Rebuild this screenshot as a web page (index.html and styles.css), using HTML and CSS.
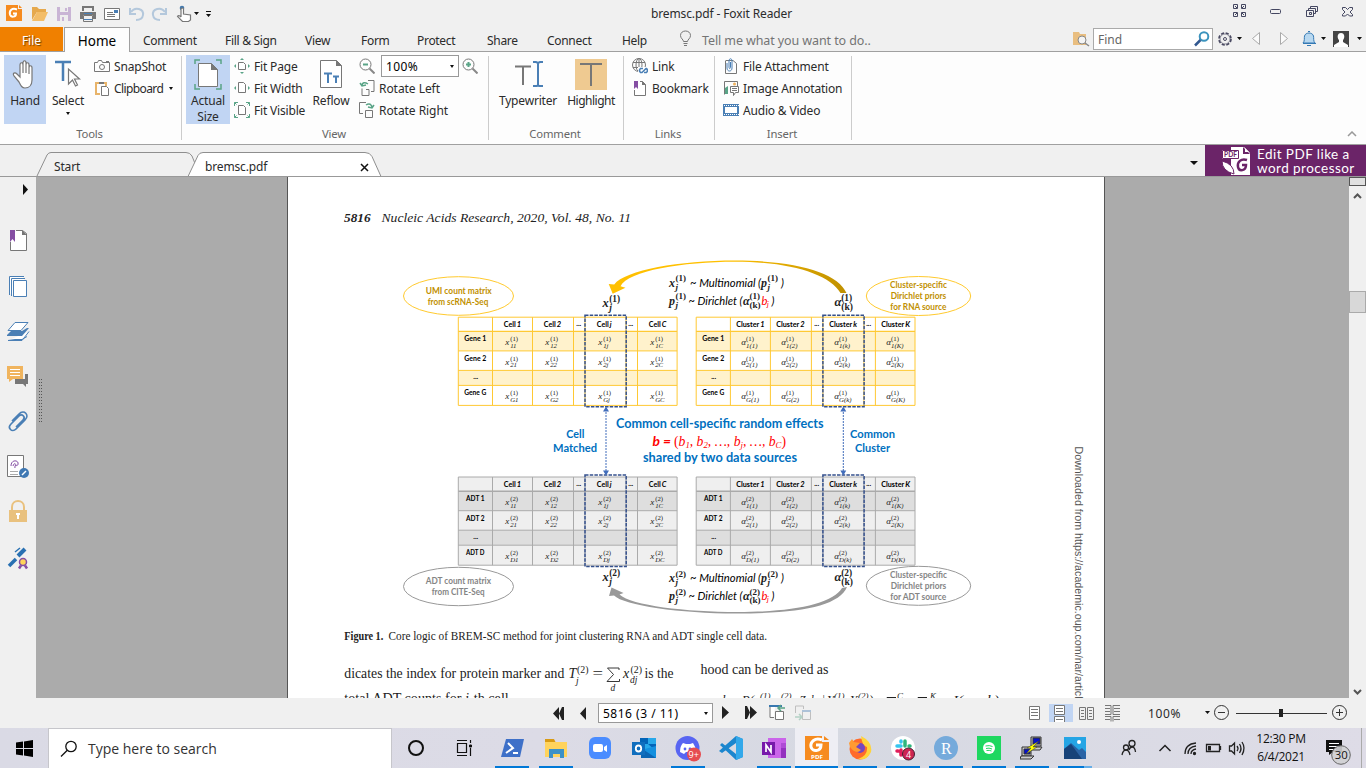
FILE: index.html
```html
<!DOCTYPE html>
<html lang="en">
<head>
<meta charset="utf-8">
<title>bremsc.pdf - Foxit Reader</title>
<link rel="stylesheet" href="styles.css">
</head>
<body>
<div class="app">
  <header class="titlebar">
    <svg class="quick" width="216" height="27" viewBox="0 0 216 27">
      <path fill="#f68b1f" d="M6 5h12v4h4v12H6z"/><path fill="#f68b1f" d="M19 5l3 3h-3z"/>
      <path d="M17 9.500c-5-2-8 1-7 5 1 3 6 3 6-1h-3" fill="none" stroke="#fff" stroke-width="2"/>
      <path fill="#e6a94d" d="M32 7h5l2 2h7v3H37l-5 8z"/><path fill="#f3bd68" d="M37 12h11l-4 9H32z"/>
      <path fill="#c9b5d5" d="M57 7h14v14H57z"/><path fill="#eee" d="M60 7h8v5h-8zM60 15h8v6h-8z"/><path fill="#c9b5d5" d="M65 8h2v3h-2zM62 17h2v4h-2z"/>
      <path fill="#777" d="M82 6h12v5h-2V8h-8v3h-2zM80 12h16v7h-3v-4H83v4h-3z"/><path fill="#4a7fb5" d="M84 13h8v1h-8zM84 19h8v1h-8z"/><path fill="none" stroke="#777" d="M83.500 15.500h9v6h-9z"/>
      <path fill="#fff" stroke="#777" d="M104.500 8.500h15v11h-15z"/><path stroke="#777" d="M107 12.500h6M107 14.500h8M107 16.500h8"/><path fill="#4a7fb5" d="M114 10h4v3h-4z"/>
      <path d="M131 12c4-6 13-3 12 3-.5 4-4 5-7 5M130 8v6h6" fill="none" stroke="#b4c8dc" stroke-width="2"/>
      <path d="M165 12c-4-6-13-3-12 3 .5 4 4 5 7 5M166 8v6h-6" fill="none" stroke="#b4c8dc" stroke-width="2"/>
      <circle cx="182" cy="8" r="2.300" fill="#4379ad"/><path d="M181 17V9q1.500-2 2.500 0v5l7 1v5l-2 1.500h-6l-5-5q1-2 3.500.5" fill="#fff" stroke="#777" stroke-width="1.200"/>
      <path d="M194 12h5l-2.500 3zM206 14h5l-2.500 3z" fill="#111"/><path d="M206 11.500h5" stroke="#111"/>
    </svg>
    <div class="window-title">bremsc.pdf - Foxit Reader</div>
    <svg class="window-controls" width="126" height="27" viewBox="1232 0 126 27" fill="none" stroke="#444761">
      <path d="M1233.500 4.500h4v4h-4zM1241.500 4.500h4v4h-4zM1233.500 12.500h4v4h-4zM1241.500 12.500h4v4h-4zM1235 6l2 2M1244 6l-2 2M1235 15l2-2M1244 15l-2-2"/>
      <rect x="1270.500" y="9.500" width="10" height="4" rx="1"/>
      <path d="M1306.500 10.500h7v6h-7zM1309.500 12.500h2v2h-2zM1308.500 10V8.500h7v5H1314M1310.500 8V6.500h7v5H1316"/>
      <path d="M1342.500 7.500h3l2 2 2-2h3v2l-2.500 2.500 2.500 2.500v1.500h-3l-2-2-2 2h-3v-1.500l2.500-2.500-2.500-2.500z"/>
    </svg>
  </header>

  <nav class="menubar">
    <span class="file-tab">File</span>
    <span class="home-tab">Home</span>
    <span class="menu m-comment">Comment</span>
    <span class="menu m-fill">Fill &amp; Sign</span>
    <span class="menu m-view">View</span>
    <span class="menu m-form">Form</span>
    <span class="menu m-protect">Protect</span>
    <span class="menu m-share">Share</span>
    <span class="menu m-connect">Connect</span>
    <span class="menu m-help">Help</span>
    <svg class="bulb" width="14" height="18" viewBox="0 0 14 18" fill="none" stroke="#777"><path d="M4.500 11.500c0-2-3-3-3-6 0-6 10-6 10 0 0 3-3 4-3 6zM4.500 13.500h4M5 15.500h3"/></svg>
    <span class="tell">Tell me what you want to do..</span>
    <svg class="find-folder" width="18" height="16" viewBox="0 0 18 16"><path fill="#e9be80" d="M1 1h6l1 2h6v11H1z"/><circle cx="10" cy="9" r="4" fill="#f4f4f4" stroke="#888"/><path stroke="#888" stroke-width="1.500" d="M13 12l4 3"/></svg>
    <span class="find"><span>Find</span><svg width="16" height="16" viewBox="0 0 16 16" fill="none"><circle cx="10" cy="5.500" r="4.300" stroke="#3b93bd" stroke-width="2"/><path d="M6.500 9L1 14.500" stroke="#325890" stroke-width="2.500"/></svg></span>
    <svg class="menu-right" width="150" height="24" viewBox="1216 27 150 24">
      <circle cx="1225" cy="39" r="6" fill="none" stroke="#4a4a62" stroke-width="1.700" stroke-dasharray="3.100 1.610"/><circle cx="1225" cy="39" r="5" fill="#f0f0f0" stroke="#4a4a62" stroke-width=".6"/><circle cx="1225" cy="39" r="1.500" fill="none" stroke="#4a4a62"/>
      <path fill="#111" d="M1237 37h5l-2.500 3zM1321 37h5l-2.500 3zM1357 37h5l-2.500 3z"/>
      <path fill="#fbfbfb" stroke="#aaa" d="M1259.500 32.500v12l-7-6zM1280.500 32.500v12l7-6z"/>
      <path d="M1303 43c2-2 1-5 1.500-7 1-4 8-4 9 0 .5 2-.5 5 1.500 7z" fill="#b8d8f0" stroke="#3479b4"/><path d="M1303 43.500h13M1307 45.500h4M1308 31.500h2" stroke="#3479b4"/>
      <path fill="#444" d="M1333 31h16v16h-16z"/><path fill="#fff" d="M1334 47v-2l5-3v-2c-2-2-2-7 2-7s4 5 2 7v2l5 3v2z"/>
    </svg>
  </nav>

  <section class="ribbon">
    <div class="group g-tools">
      <div class="group-row">
        <div class="big active hand"><svg width="28" height="32" viewBox="0 0 28 32"><path transform="translate(0 2)" d="M8 22L3 16c-2-3 1-4 3-2l3 3V5c0-3 3-3 3 0v8-10c0-3 3-3 3 0v10V5c0-3 3-3 3 0v9V8c0-3 3-3 3 0v12c0 5-3 8-7 8-3 0-4-2-6-6z" fill="#fff" stroke="#777" stroke-width="1.200"/></svg><span>Hand</span></div>
        <div class="big select"><svg width="30" height="32" viewBox="0 0 30 32"><path d="M2 4h16M10 5v18" stroke="#4a7fb5" stroke-width="2.500"/><path d="M15.500 11v15l4-4 3 6 2-1-3-6h5z" fill="#fff" stroke="#777" stroke-width="1.200"/></svg><span>Select</span><i class="drop"></i></div>
        <div class="stack s-tools">
          <div class="tool"><svg width="16" height="16" viewBox="0 0 16 16" fill="none" stroke="#777"><path d="M.5 4.500h3l1-2h3l1 2h7v9H.5z"/><circle cx="8" cy="9" r="2.500"/><path d="M12 3.500h3"/></svg><span>SnapShot</span></div>
          <div class="tool"><svg width="16" height="16" viewBox="0 0 16 16" fill="none"><path d="M5 3H2v11h4M10 3h2v3" stroke="#e8b46a" stroke-width="2"/><path d="M5 2h5v2H5z" fill="#777"/><path d="M7.500 6.500h5l2 2v7h-7z" fill="#fff" stroke="#777"/></svg><span class="clip-label">Clipboard</span><i class="drop"></i></div>
        </div>
      </div><div class="group-label">Tools</div>
    </div>
    <div class="group g-view">
      <div class="group-row">
        <div class="big active actual"><svg width="30" height="32" viewBox="0 0 30 32"><path d="M2 6V2h5M23 2h5v4M2 26v5h5M23 31h5v-5" fill="none" stroke="#5aa487" stroke-width="1.500"/><path d="M5.500 5.500h13l6 6v17h-19z" fill="#fff" stroke="#777"/><path d="M18 5v7h7z" fill="#777"/></svg><span>Actual<br>Size</span></div>
        <div class="stack s-fit">
          <div class="tool"><svg width="16" height="16" viewBox="0 0 16 16"><path d="M4.500 4.500h5l2 2v5h-7z" fill="#fff" stroke="#777"/><path fill="#5aa487" d="M6 2l2-2 2 2zM6 14l2 2 2-2zM2 6L0 8l2 2zM14 6l2 2-2 2z"/></svg><span>Fit Page</span></div>
          <div class="tool"><svg width="16" height="16" viewBox="0 0 16 16"><path d="M4.500 2.500h5l2 2v8h-7z" fill="#fff" stroke="#777"/><path fill="#5aa487" d="M2 6L0 8l2 2zM14 6l2 2-2 2z"/></svg><span>Fit Width</span></div>
          <div class="tool"><svg width="16" height="16" viewBox="0 0 16 16"><path d="M4.500 3.500h5l2 2v7h-7z" fill="#fff" stroke="#777"/><path d="M.5 4V.5H4M.5.5l2 2M12 .5h3.500V4M15.500.5l-2 2M.5 12v3.500H4M.5 15.500l2-2M12 15.500h3.500V12M15.500 15.500l-2-2" stroke="#5aa487" fill="none"/></svg><span>Fit Visible</span></div>
        </div>
        <div class="big reflow"><svg width="24" height="32" viewBox="0 0 24 32"><path d="M1.500 2.500h16l5 5v22h-21z" fill="#fff" stroke="#777"/><path d="M17 2v6h6z" fill="#777"/><path d="M5 15.500h8M9 16v9M14 18.500h6M17 19v6" stroke="#4a7fb5" stroke-width="2"/></svg><span>Reflow</span></div>
        <div class="stack s-zoom">
          <div class="tool"><svg width="16" height="16" viewBox="0 0 16 16" fill="none"><circle cx="6.500" cy="6.500" r="5.500" stroke="#777"/><path d="M10.500 10.500l5 5" stroke="#888" stroke-width="2"/><path d="M4 6.500h5" stroke="#5aa487" stroke-width="2"/></svg><div class="zoom-box"><span>100%</span><i class="drop"></i></div><svg class="zoom-in" width="16" height="16" viewBox="0 0 16 16" fill="none"><circle cx="6.500" cy="6.500" r="5.500" stroke="#777"/><path d="M10.500 10.500l5 5" stroke="#888" stroke-width="2"/><path d="M4 6.500h5M6.500 4v5" stroke="#5aa487" stroke-width="2"/></svg></div>
          <div class="tool"><svg width="16" height="16" viewBox="0 0 16 16" fill="none" stroke="#777"><path d="M3 8.500v7h7v-6H7M9 .5h6v11h-3"/><path d="M3 6c0-4 3-4 6-2M1 3l2 3 4-1" stroke="#5aa487" stroke-width="1.500"/></svg><span>Rotate Left</span></div>
          <div class="tool"><svg width="16" height="16" viewBox="0 0 16 16" fill="none" stroke="#777"><path d="M7 .5H.5v11H4M6.500 8.500h7v7h-7z"/><path d="M7 3c3-2 6-1 6 3M9 5l4 1 2-3" stroke="#5aa487" stroke-width="1.500"/></svg><span>Rotate Right</span></div>
        </div>
      </div><div class="group-label">View</div>
    </div>
    <div class="group g-comment">
      <div class="group-row">
        <div class="big typewriter"><svg width="32" height="32" viewBox="0 0 32 32"><path d="M3 8.500h16M11 9v18" stroke="#777" stroke-width="2"/><path d="M21 4h3l2 1 2-1h3M26 5v23M21 28h4l1-1 1 1h4" stroke="#4a7fb5" stroke-width="2" fill="none"/></svg><span>Typewriter</span></div>
        <div class="big highlight"><svg width="32" height="32" viewBox="0 0 32 32"><path fill="#efca91" d="M0 1h32v31H0z"/><path d="M5 6h22M16 6v22" stroke="#777" stroke-width="2"/></svg><span>Highlight</span></div>
      </div><div class="group-label">Comment</div>
    </div>
    <div class="group g-links">
      <div class="group-row"><div class="stack s-links">
        <div class="tool"><svg width="16" height="16" viewBox="0 0 16 16" fill="none" stroke="#777"><circle cx="7" cy="7" r="6.500"/><ellipse cx="7" cy="7" rx="3" ry="6.500"/><path d="M1 4.500h12M1 9.500h7M7 0v14"/><path fill="#fff" stroke="none" d="M6 9h10v7H6z"/><path d="M11 10.500H8.500q-2 2 0 4H10l4-4h.5q2 2 0 4H12" stroke="#4a7fb5" stroke-width="1.600"/></svg><span>Link</span></div>
        <div class="tool"><svg width="16" height="16" viewBox="0 0 16 16"><path d="M2.500 10v5.500h11v-11l-3-3H8" fill="#fff" stroke="#777"/><path d="M10 1v4h4z" fill="#777"/><path fill="#854ea3" d="M2 1h4v8L4 7 2 9z"/></svg><span>Bookmark</span></div>
      </div></div><div class="group-label">Links</div>
    </div>
    <div class="group g-insert">
      <div class="group-row"><div class="stack s-insert">
        <div class="tool"><svg width="16" height="16" viewBox="0 0 16 16" fill="none"><path d="M3 2.500h7l3.500 3v10h-11v-13" stroke="#777"/><path d="M4 5v5c0 4 5 4 5 0V3c0-3-3-3-3 0v6c0 2 1.500 2 1.500 0V4" stroke="#4a7fb5"/></svg><span>File Attachment</span></div>
        <div class="tool"><svg width="16" height="16" viewBox="0 0 16 16"><path d="M1.500 14.500v-13h13v5" fill="none" stroke="#777"/><path fill="#5aa487" d="M2 14V8l3-2v8z"/><circle cx="11.500" cy="4" r="1.500" fill="#efb15d"/><path d="M7.500 6.500h8v6h-3l-2 3v-3h-3z" fill="#fff" stroke="#777"/><path d="M9 8.500h5M9 10.500h5" stroke="#777"/></svg><span>Image Annotation</span></div>
        <div class="tool"><svg width="16" height="16" viewBox="0 0 16 16"><path d="M0 2h16v12H0z" fill="#4a7fb5"/><path d="M2 5h12v6H2z" fill="#fff"/><path d="M1 3.500h15M1 12.500h15" stroke="#fff" stroke-dasharray="1 1"/></svg><span>Audio &amp; Video</span></div>
      </div></div><div class="group-label">Insert</div>
    </div>
    <svg class="collapse" width="10" height="6" viewBox="0 0 10 6"><path d="M1 5l4-4 4 4" fill="none" stroke="#999" stroke-width="1.500"/></svg>
  </section>

  <section class="doc-tabs">
    <svg class="tab-shapes" width="400" height="31" viewBox="0 145 400 31"><path d="M37 176l10-21q1.500-2.500 4-2.500h135q4 0 6 3.500l8 20" fill="#f0f0f0" stroke="#8e8e8e"/><path d="M188 176.500l10-21q1.500-3 5-3h162q5 0 7 4l9 20" fill="#fff" stroke="#8e8e8e"/><path d="M361 164l7 7M368 164l-7 7" stroke="#111" stroke-width="1.500"/></svg>
    <span class="doc-start">Start</span><span class="doc-current">bremsc.pdf</span>
    <i class="drop tab-menu"></i>
    <div class="promo"><svg width="28" height="28" viewBox="0 0 28 28"><path fill="#fff" d="M9 0h13l6 6v22H9z"/><path fill="#6b2468" d="M21 0v7h7z"/><path fill="#fff" d="M23 1v4h4zM0 3h17v9H0z"/><path fill="none" stroke="#6b2468" d="M.5 3.500h16v8H.5z"/><text x="2" y="10" font-size="6.500" font-weight="700" fill="#6b2468" textLength="13">PDF</text><path d="M0 14q12 3 12 13Q0 24 0 14z" fill="#fff" stroke="#6b2468"/><path d="M25 13c-6-2-10 2-9 7 1 5 8 4 8-2h-4" fill="none" stroke="#6b2468" stroke-width="2.500"/></svg><div class="promo-copy"><span>Edit PDF like a</span><span>word processor</span></div></div>
  </section>

  <main class="workspace">
    <aside class="sidebar">
      <svg width="36" height="410" viewBox="0 177 36 410" fill="none">
        <path d="M23 184v11l5-5.500z" fill="#111"/>
        <path d="M10.500 242v8.500h16v-17l-4-3H16" fill="#fff" stroke="#777"/><path d="M22 230v5h5z" fill="#777"/><path d="M10 230h5v12l-2.500-3-2.500 3z" fill="#854ea3"/>
        <path d="M9.500 295v-18.500H24M11.500 296v-17.500H25M13.500 280.500h13v16h-13z" fill="#fff" stroke="#4a7fb5"/>
        <path d="M8 340.500h14l7-9M8 340.500l7-1h7l5-3" stroke="#4a7fb5" fill="#fff"/><path d="M15 322.500h13l-7 8H8z" fill="#fff" stroke="#4a7fb5"/><path d="M7 335l4-4h11l5-3h2l-7 8H7z" fill="#4a7fb5"/>
        <path d="M15 379h10v-5h3v10h-2v3l-3-3h-8z" fill="#777"/><path d="M7 366h16v13H13l-4 3v-3H7z" fill="#f0b45e"/><path d="M10 369.500h10M10 372.500h10M10 375.500h10" stroke="#fff"/>
        <path d="M16 428l7-7c3-3-1-7-4-4l-8 8c-4 4 1 9 5 5l9-9c5-5-1-11-6-6l-7 7" transform="translate(0 -1)" stroke="#4a7fb5" stroke-width="1.700"/>
        <path d="M7.500 455.500h16v21h-16z" fill="#fff" stroke="#777"/><path d="M11 466c0-7 8-6 7-2 0 3-4 0-3 4M13 466c1-4 4-2 2 0" stroke="#854ea3"/><path d="M10 471.500h8M10 474.500h8" stroke="#aaa"/><circle cx="24" cy="473" r="5" fill="#3f78b3"/><path d="M22 475l4-4" stroke="#fff" stroke-width="1.500"/>
        <path d="M12 511v-4c0-8 12-8 12 0v4" stroke="#e9c17e" stroke-width="2"/><path d="M9 510h18v12H9z" fill="#e9c17e"/><path d="M16 513h4v2h-1v4h-2v-4h-1z" fill="#fff"/>
        <path d="M9 566l7-7" stroke="#2870b2" stroke-width="3.500"/><path d="M18 556l7-7" stroke="#2870b2" stroke-width="4"/><path d="M15 552l5-4" stroke="#2870b2" stroke-width="1.500"/><circle cx="23" cy="562" r="3.500" fill="#ffd45a" stroke="#854ea3" stroke-width="1.500"/><path d="M21 565.500l-2 3M25 565.500l2 3" stroke="#854ea3" stroke-width="2.500"/>
      </svg>
    </aside>
    <div class="gutter"><div class="handle"></div></div>
    <article class="page">
      <svg id="paper" width="816" height="521" viewBox="288 177 816 521">
        <g class="times">
          <text class="bi" x="344" y="222" font-size="13.500" textLength="26.500">5816</text>
          <text class="it" x="381.500" y="222" font-size="13.500" textLength="249.500">Nucleic Acids Research, 2020, Vol. 48, No. 11</text>
        </g>
        <g class="gold-outline"><ellipse cx="458.500" cy="296" rx="55" ry="19.300"/><ellipse cx="918.500" cy="296" rx="52.200" ry="19.500"/></g>
        <defs><linearGradient id="gold"><stop offset=".5" stop-color="#ffc000"/><stop offset="1" stop-color="#bf9000"/></linearGradient></defs>
        <path fill="url(#gold)" d="M608.700 284l5.500.5C625 270 680 260.500 735 260.500c60 0 103 12 111.500 32.500h-6C829 274 790 261.800 735 261.800c-52 0-107 9-114.500 24.500l5 1.500-12.800 6z"/>
        <g id="figure"></g>
        <g class="gray-outline"><ellipse cx="458.500" cy="586.500" rx="55" ry="19.200"/><ellipse cx="918.500" cy="585.800" rx="52.200" ry="19.500"/></g>
        <path fill="#999" d="M611.500 587.500l12 5.500-4 1.500c12 11 66 17.500 118 17.500 55 0 95-8 104.500-24l5-1C839 606 800 613.500 736 613.500c-56 0-112-8-122-18l-5 .5z"/>
        <g class="calibri label-gold"><text x="425.700" y="293.700" textLength="66">UMI count matrix</text><text x="427.700" y="304.500" textLength="60.600">from scRNA-Seq</text><text x="890" y="288" textLength="57">Cluster-specific</text><text x="890.700" y="299" textLength="55.600">Dirichlet priors</text><text x="890.300" y="310" textLength="56">for RNA source</text></g>
        <g class="calibri label-gray"><text x="425.700" y="584" textLength="65.300">ADT count matrix</text><text x="431.700" y="595" textLength="53">from CITE-Seq</text><text x="890" y="578" textLength="57">Cluster-specific</text><text x="890.700" y="589" textLength="55.600">Dirichlet priors</text><text x="890.300" y="600" textLength="56">for ADT source</text></g>
        <g class="calibri label-blue"><text x="616" y="428" textLength="207.500">Common cell-specific random effects</text><text x="643" y="462" textLength="154">shared by two data sources</text></g>
        <g class="calibri label-blue side-label"><text x="566.300" y="438" textLength="18">Cell</text><text x="553" y="452" textLength="44">Matched</text><text x="850" y="437.500" textLength="45">Common</text><text x="855" y="451.500" textLength="35">Cluster</text></g>
        <g class="red"><text class="calibri bold-it" x="652.500" y="445.500" font-size="14" textLength="18.500">b =</text><text class="math-it" x="674" y="445.500" font-size="14" textLength="112"><tspan class="up">(</tspan>b<tspan font-size="9" dy="2.500">1</tspan><tspan dy="-2.500">, b</tspan><tspan font-size="9" dy="2.500">2</tspan><tspan dy="-2.500">, …, b</tspan><tspan font-size="9" dy="2.500">j</tspan><tspan dy="-2.500">, …, b</tspan><tspan font-size="9" dy="2.500">C</tspan><tspan class="up" dy="-2.500">)</tspan></text></g>
        <g class="times">
          <text x="344.300" y="639.500" font-size="11.500" font-weight="700" textLength="39">Figure 1.</text>
          <text x="388.500" y="639.500" font-size="11.500" textLength="378.500">Core logic of BREM-SC method for joint clustering RNA and ADT single cell data.</text>
          <text x="344.300" y="678.300" font-size="14" textLength="220">dicates the index for protein marker and</text>
          <text class="it" x="568.500" y="678.300" font-size="14">T</text><text x="577" y="672.500" font-size="9.500" textLength="11.500">(2)</text><text class="it" x="576" y="684" font-size="9.500">j</text><text x="592.500" y="678.300" font-size="14" textLength="10.500">=</text><path d="M619 670v-2h-11.500l6 6.500-6.500 7h12.500v-2.500" fill="none" stroke="#222" stroke-width=".9"/><text class="it" x="610.500" y="690.500" font-size="9.500">d</text><text class="it" x="623" y="678.300" font-size="14">x</text><text x="630.500" y="672.500" font-size="9.500" textLength="11.500">(2)</text><text class="it" x="630" y="682.500" font-size="9.500">dj</text><text x="644.500" y="678.300" font-size="14" textLength="29">is the</text>
          <text x="700.500" y="674.300" font-size="14" textLength="128">hood can be derived as</text>
          <text x="344.300" y="703" font-size="14" textLength="168">total ADT counts for <tspan class="it">j</tspan>-th cell.</text>
          <g class="it"><text x="722" y="704" font-size="13" textLength="32">log P(</text><text x="754" y="704" font-size="13">x</text><text x="760" y="699" font-size="9">(1)</text><text x="775" y="704" font-size="13">x</text><text x="781" y="699" font-size="9">(2)</text><text x="794" y="704" font-size="13" textLength="31">, Z, b, |</text><text x="827" y="704" font-size="13">Y</text><text x="834" y="699" font-size="9">(1)</text><text x="850" y="704" font-size="13">Y</text><text x="858" y="699" font-size="9">(2)</text><text x="869" y="704" font-size="13">)</text><text x="897" y="699" font-size="9">C</text><text x="930" y="699" font-size="9">K</text><text x="953" y="704" font-size="13" textLength="46">I(z = k)</text></g><path d="M896 697.500h-9l4 5M927 697.500h-9l4 5" fill="none" stroke="#222"/>
        </g>
        <text class="download" transform="translate(1074.500 446.500) rotate(90)" font-size="10.500" textLength="258">Downloaded from https://academic.oup.com/nar/article</text>
      </svg>
    </article>
    <div class="gutter-right"></div>
    <div class="scrollbar"><div class="split"></div><svg width="17" height="14" viewBox="0 0 17 14"><path d="M5 9l3.500-3.500L12 9" fill="none" stroke="#555" stroke-width="2"/></svg><div class="thumb"></div><svg class="down" width="17" height="12" viewBox="0 0 17 12"><path d="M5 4l3.500 3.500L12 4" fill="none" stroke="#555" stroke-width="2"/></svg></div>
  </main>

  <footer class="status">
    <svg class="prev" width="36" height="16" viewBox="552 705 36 16"><path fill="#222" d="M559 707v13l-6-6.500zM562 707h2v13h-2l-3-6.500zM586 707v13l-6-6.500z"/></svg>
    <div class="page-box"><span>5816 (3 / 11)</span><i class="drop"></i></div>
    <svg class="next" width="94" height="18" viewBox="720 705 94 18"><path fill="#222" d="M722 707v13l7-6.500zM745 707h2l3 6.500-3 6.500h-2zM750 707v13l7-6.500z"/><g fill="none"><path d="M775 707.500h-5v11h4M775.500 712.500h8v8h-8z" stroke="#777" fill="#fff"/><path d="M769 706h13v2h-13z" fill="#3979b0"/><path d="M785 709h-6M781 706l-3 3 3 3" stroke="#5aa487" stroke-width="1.500"/><g opacity=".4"><path d="M795.500 714v-7h8v3M802.500 712.500h8v8h-8z" stroke="#777"/><path d="M802 711h9v2h-9z" fill="#4a7fb5"/><path d="M795 718h6M799 715l3 3-3 3" stroke="#5aa487" stroke-width="1.500"/></g></g></svg>
    <svg class="view-modes" width="94" height="20" viewBox="1028 704 94 20" fill="none" stroke="#777"><path fill="#c1d5f3" stroke="none" d="M1049 705h24v18h-24z"/><path fill="#fff" d="M1029.500 707.500h10v13h-10zM1054.500 706.500h10v9h-10zM1054.500 723v-5.500h10v5.500"/><path d="M1031 710.500h7M1031 713.500h7M1031 716.500h7M1056 709.500h7M1056 712.500h7M1056 720.500h7M1079.500 708.500h6v12h-6zM1087.500 708.500h6v12h-6zM1081 711.500h3M1081 714.500h3M1081 717.500h3M1089 711.500h3M1089 714.500h3M1089 717.500h3M1105 706.500h6v9h-6M1120 706.500h-7v9h7M1105 709.500h5M1114 709.500h6M1105 712.500h5M1114 712.500h6M1105 717.500h6v5M1120 717.500h-7v5M1105 720.500h5M1114 720.500h6"/></svg>
    <span class="percent">100%</span>
    <svg class="slider" width="144" height="18" viewBox="1204 704 144 18" fill="none" stroke="#333"><path fill="#111" stroke="none" d="M1205 711h5l-2.500 3z"/><circle cx="1221.500" cy="712.500" r="7"/><circle cx="1339.500" cy="712.500" r="7"/><path d="M1218 712.500h7M1336 712.500h7M1339.500 709v7M1236 713.500h91"/><path fill="#222" stroke="none" d="M1279 709h4v8h-4z"/></svg>
  </footer>

  <footer class="taskbar">
    <div class="start"><svg width="17" height="17" viewBox="0 0 17 17"><path d="M0 2.500l7-1v6.500H0zM8 1.400L17 0v8H8zM0 9h7v6.500l-7-1zM8 9h9v8l-9-1.400z"/></svg></div>
    <div class="search"><svg width="18" height="18" viewBox="0 0 18 18" fill="none" stroke="#111" stroke-width="1.300"><circle cx="11" cy="6.500" r="5.200"/><path d="M7.300 10.200L1 16.500"/></svg><span>Type here to search</span></div>
    <div class="task cortana"><svg width="24" height="24" viewBox="0 0 24 24"><circle cx="12" cy="12" r="7" fill="none" stroke="#111" stroke-width="2"/></svg></div>
    <div class="task viewer"><svg width="24" height="24" viewBox="0 0 24 24" fill="none" stroke="#111"><path d="M4.500 7.500h9v9h-9zM4 4.500h10M4 19.500h10M17.500 4v3M17.500 12v8" stroke-width="1.200"/><path fill="#111" d="M16.500 9h2v2h-2z"/></svg></div>
    <div class="task wide open"><svg width="24" height="24" viewBox="0 0 24 24"><path d="M6 3h18l-4 18H1z" fill="#3e70c8"/><path d="M8 7l5 5-7 5M13 17h5" fill="none" stroke="#fff" stroke-width="2"/></svg></div>
    <div class="task wide open"><svg width="24" height="24" viewBox="0 0 24 24"><path fill="#d99b14" d="M1 3h9l2 4H1z"/><path fill="#ffd35c" d="M1 6h22v15H1z"/><path fill="#3c91c7" d="M5 13h15v9h-4v-4h-7v4H5z"/></svg></div>
    <div class="task wide"><svg width="24" height="24" viewBox="0 0 24 24"><rect x="1" y="1" width="22" height="22" rx="6" fill="#4a8cff"/><rect x="5" y="8" width="10" height="8" rx="2" fill="#fff"/><path fill="#fff" d="M16 11l3-2v7l-3-2z"/></svg></div>
    <div class="task wide"><svg width="24" height="24" viewBox="0 0 24 24"><path fill="#28a8ea" d="M8 2h16v13H8z"/><path fill="#0364b8" d="M8 2h8v6H8zM16 8h8v7z"/><path fill="#1490df" d="M9 14l15-4v12H9z"/><path fill="#0b65b4" d="M9 12l15 10H9z"/><path fill="#106ebe" d="M0 6h13v13H0z"/><ellipse cx="6.500" cy="12.500" rx="2.700" ry="3" fill="none" stroke="#fff" stroke-width="1.800"/></svg></div>
    <div class="task open"><svg width="26" height="26" viewBox="0 0 26 26"><circle cx="12.500" cy="12" r="12" fill="#5865f2"/><path d="M5 16q0-6 3-9l3 1h4l3-1q3 4 3 9l-4 2-2-2h-4l-2 2z" fill="#fff"/><circle cx="10" cy="13" r="1.400" fill="#5865f2"/><circle cx="15" cy="13" r="1.400" fill="#5865f2"/><circle cx="19" cy="18.500" r="7" fill="#e64c50"/><text x="13.500" y="22" font-size="9" fill="#fff">9+</text></svg></div>
    <div class="task"><svg width="24" height="24" viewBox="0 0 24 24"><path d="M17 0l7 3v18l-7 3L1 9l2-2 14 11V7L3 17l-3-2z" fill="#1b86ce"/><path fill="#32a8ea" d="M17 0l7 3v18l-7 3z"/></svg></div>
    <div class="task open"><svg width="24" height="24" viewBox="0 0 24 24"><path fill="#ca64ea" d="M6 2h18v20H6z"/><path fill="#ae4bd5" d="M19 7h5v5h-5z"/><path fill="#9332bf" d="M19 12h5v10h-5z"/><path fill="#7719aa" d="M0 6h13v13H0z"/><path d="M4 16V9l5 7V9" fill="none" stroke="#fff" stroke-width="1.700"/></svg></div>
    <div class="task open current"><svg width="24" height="24" viewBox="0 0 24 24"><path fill="#f68b1f" d="M0 0h17v6h7v18H0z"/><path fill="#f68b1f" d="M19 0l5 4h-5z"/><path d="M17 4c-7-3-12 2-11 7 1 5 10 5 10-2h-5" fill="none" stroke="#fff" stroke-width="3"/><text x="6" y="22.500" fill="#fff" font-size="5.500" font-weight="700" textLength="12">PDF</text></svg></div>
    <div class="task open"><svg width="24" height="24" viewBox="0 0 24 24"><circle cx="12" cy="13" r="10.500" fill="#ff6b2b"/><path d="M13 0q12 6 10 16-4 9-13 7 10-3 9-12-5-1-6-11z" fill="#ffd43b"/><circle cx="12" cy="12" r="5" fill="#7547bf"/><path d="M1 7l3-4 2 3 6 1-4 4 5 3q-5 5-11-3z" fill="#ff9b32"/></svg></div>
    <div class="task open"><svg width="24" height="26" viewBox="0 0 24 26"><circle cx="12" cy="12" r="12" fill="#fff"/><g stroke-width="3.500" stroke-linecap="round"><path stroke="#36c5f0" d="M6 10h4M10 5v1"/><path stroke="#2eb67d" d="M14 5v5M18 10h1"/><path stroke="#e01e5a" d="M10 14v5M6 15h1"/><path stroke="#ecb22e" d="M14 15h4"/></g><circle cx="17.500" cy="18" r="6" fill="#cd2553" stroke="#431f30"/><text x="15" y="21.500" font-size="9" fill="#fff">4</text></svg></div>
    <div class="task open"><svg width="24" height="24" viewBox="0 0 24 24"><circle cx="12" cy="12" r="12" fill="#75aadb"/><text class="r-letter" x="7" y="17.500" font-size="16" fill="#fff">R</text></svg></div>
    <div class="task open"><svg width="24" height="24" viewBox="0 0 24 24"><path fill="#1ed760" d="M0 0h24v24H0z"/><circle cx="12" cy="12" r="6" fill="#fff"/><path d="M8.500 10q4-1 7 .5M9 12.500q3-1 6 .5M9.500 14.500q3-.5 5 .5" fill="none" stroke="#1ed760"/></svg></div>
    <div class="task open"><svg width="24" height="24" viewBox="0 0 24 24" stroke="#333"><path d="M11 1h10v9H11z" fill="#ccc"/><path d="M13 2h7v6h-7z" fill="#0712c9"/><path d="M10 11h12l-2 3H10z" fill="#ccc"/><path d="M2 11h9v9H2z" fill="#ccc"/><path d="M4 13h6v5H4z" fill="#0712c9"/><path d="M1 20h13l-3 3H0z" fill="#ccc"/><path d="M19 5L7 12h4l-5 6 11-7h-4z" fill="#ff0" stroke-width=".5"/></svg></div>
    <div class="task open photos"><svg width="24" height="24" viewBox="0 0 24 24"><path fill="#25a5e5" d="M1 1h22v22H1z"/><circle cx="16" cy="6" r="2" fill="#fff"/><path fill="#2a63a5" d="M1 13l7-6 8 7 3-2 4 4v7H1z"/><path fill="#174279" d="M1 13l7-5 11 15H1z"/></svg></div>
    <svg class="tray" width="124" height="40" viewBox="1118 728 124 40" fill="none" stroke="#222" stroke-width="1.300"><circle cx="1132" cy="743.500" r="3"/><path d="M1129 750q1-3 3-3 3 0 3.500 5"/><circle cx="1126" cy="747.500" r="2.500"/><path d="M1122 755q1-5 4-5t4 5"/><path d="M1159.500 751l5.500-5.500 5.500 5.500" stroke-width="1.500"/><path d="M1185 754q0-10 11-11M1188 754q0-7 8-8M1191 754q0-4 5-5"/><circle cx="1194.500" cy="753.500" r="1" fill="#111"/><path d="M1206.500 744.500h13v7h-13zM1220.500 746v4"/><path d="M1208 746h3v4.500h-3z" fill="#222" stroke="none"/><path d="M1229.500 746h2l3-3v11l-3-3h-2zM1237 746q2 2.500 0 5M1239.500 744q3 4.500 0 9M1242 742q4 6 0 13"/></svg>
    <div class="clock"><span class="time">12:30 PM</span><span class="date">6/4/2021</span></div>
    <svg class="notice" width="28" height="40" viewBox="1322 728 28 40"><path fill="#111" d="M1325 740h16v12h-9l-4 3v-3h-3z"/><path d="M1328 743.500h10M1328 746.500h10M1328 749.500h7" stroke="#fff"/><circle cx="1340" cy="755" r="9.300" fill="#d0d0d3" fill-opacity=".9" stroke="#666"/><text x="1333.700" y="759" font-size="11.500" fill="#111" textLength="13">30</text></svg>
    <div class="show-desktop"></div>
  </footer>
</div>
<script src="figure.js"></script>
</body>
</html>
```
FILE: styles.css
```css
* { box-sizing: border-box; }
body { margin: 0; background: #f0f0f0; color: #2b2b2b; font-family: "Noto Sans", "Open Sans", sans-serif; font-size: 12px; overflow: hidden; }
svg { display: block; flex: none; }
.app { display: flex; flex-direction: column; width: 1366px; height: 768px; }
span { white-space: nowrap; }
.drop { width: 0; height: 0; border: 2.5px solid transparent; border-top: 3px solid #111; border-bottom: 0; flex: none; }

.titlebar { height: 27px; display: flex; }
.window-title { width: 145px; margin-left: 435px; line-height: 27px; letter-spacing: -.12px; }
.window-controls { margin-left: auto; margin-right: 8px; }

.menubar { height: 25px; display: flex; align-items: center; border-bottom: 1px solid #a0a0a0; flex: none; }
.file-tab { width: 63px; height: 24px; background: #f08000; color: #fff; line-height: 27px; text-align: center; text-shadow: 1px 1px 1px #704000; }
.home-tab { width: 66px; height: 25px; margin: 0 13px 0 1px; border: 1px solid #a0a0a0; border-bottom: 0; background: #fdfdfd; color: #000; font-size: 13.5px; line-height: 26px; text-align: center; align-self: flex-start; }
.menu { line-height: 24px; padding-top: 3px; letter-spacing: -.3px; }
.m-comment { width: 82px; }
.m-fill { width: 80px; }
.m-view, .m-form { width: 56px; }
.m-protect { width: 70px; }
.m-share { width: 60px; }
.m-connect { width: 75px; }
.m-help { width: 57px; }
.tell { margin-left: 9px; width: 370px; font-size: 12.5px; color: #747474; line-height: 24px; padding-top: 3px; letter-spacing: -.1px; }
.find { width: 120px; height: 22px; margin: 0 3px 0 3px; padding: 0 2px 0 4px; background: #fff; border: 1px solid #aaa; display: flex; align-items: center; justify-content: space-between; color: #666; }

.ribbon { height: 93px; background: #fdfdfd; border-bottom: 1px solid #a0a0a0; display: flex; flex: none; }
.group { padding-top: 3px; height: 92px; background: linear-gradient(#ccc, #ccc) right 4px / 1px 84px no-repeat; letter-spacing: -.18px; }
.group-row { display: flex; height: 69px; }
.group-label { text-align: center; color: #666; font-size: 11.3px; line-height: 20px; padding-right: 3px; }
.g-tools { width: 182px; }
.g-view { width: 307px; }
.g-comment { width: 135px; }
.g-links { width: 91px; }
.g-insert { width: 137px; }
.big { display: flex; flex-direction: column; align-items: center; padding-top: 3px; height: 69px; text-align: center; line-height: 16px; flex: none; }
.big span { margin-top: 3px; }
.active { background: #c1d5f3; }
.hand { width: 42px; margin-left: 4px; }
.select { width: 44px; }
.select .drop { margin-top: 3px; }
.actual { width: 44px; margin-left: 4px; }
.reflow { width: 46px; margin-left: 3px; }
.typewriter { width: 66px; margin-left: 6px; }
.highlight { width: 60px; letter-spacing: -.5px; }
.stack { display: flex; flex-direction: column; flex: none; }
.s-tools { margin-left: 4px; }
.s-fit { width: 71px; margin-left: 4px; }
.s-zoom { margin-left: 5px; letter-spacing: -.05px; }
.s-links { margin-left: 8px; }
.s-insert { margin-left: 8px; }
.tool { height: 22px; display: flex; align-items: center; gap: 4px; }
.clip-label { width: 51px; letter-spacing: -.6px; }
.zoom-box { width: 78px; height: 22px; border: 1px solid #999; margin: 0 1px 0 2px; padding: 0 4px; background: #fff; display: flex; align-items: center; justify-content: space-between; color: #000; letter-spacing: .4px; }
.zoom-in { margin-left: -2px; }
.collapse { margin: auto 9px 7px auto; }

.doc-tabs { height: 32px; border-bottom: 1px solid #999; display: flex; flex: none; position: relative; line-height: 44px; }
.tab-shapes { position: absolute; left: 0; top: 0; }
.doc-start, .doc-current { z-index: 1; letter-spacing: -.15px; }
.doc-start { width: 151px; margin-left: 54px; }
.tab-menu { margin: 16px 7px 0 auto; border-width: 4.5px 4px 0; border-style: solid; }
.promo { width: 161px; height: 31px; padding: 2px 0 0 17px; background: #6b2468; color: #fff; display: flex; gap: 7px; font: 13.5px/14px Lato, sans-serif; }
.promo-copy { display: flex; flex-direction: column; letter-spacing: .45px; }

.workspace { height: 521px; display: flex; flex: none; background: #ababab; }
.sidebar { width: 36px; background: #f0f0f0; }
.gutter { width: 251px; padding: 202px 0 0 3px; }
.handle { width: 4px; height: 43px; background: radial-gradient(circle at .5px .5px, #555 .7px, transparent .8px) 0 0 / 2px 3px; }
.page { width: 818px; background: #fff; border: solid #555; border-width: 0 1px; overflow: hidden; }
.gutter-right { width: 244px; }
.scrollbar { width: 17px; background: #f0f0f0; display: flex; flex-direction: column; }
.split { height: 9px; border: 1px solid #555; background: #e0e0e0; margin-bottom: 3px; }
.thumb { height: 22px; margin-top: 88px; background: #d8d8d8; border: 1px solid #aaa; }
.down { margin-top: auto; }
text { white-space: pre; }
.times { font-family: "Liberation Serif", serif; fill: #222; }
.it, .bi, .math-it, .bold-it { font-style: italic; }
.bi, .bold-it { font-weight: 700; }
.math, .math-it { font-family: "Liberation Serif", serif; }
.up { font-style: normal; }
.calibri { font-family: Lato, sans-serif; }
.label-gold, .label-gray { font-size: 9px; font-weight: 700; fill: #bf9000; }
.label-gray { fill: #858585; }
.label-blue { font-size: 13px; font-weight: 700; fill: #0070c0; }
.side-label { font-size: 11.5px; }
.red { fill: #f00; }
.gold-outline, .gray-outline { fill: #fff; stroke: #ffca2e; }
.gray-outline { stroke: #999; }
.download { font-family: "Liberation Sans", sans-serif; fill: #555; }

.status { height: 30px; display: flex; align-items: center; flex: none; }
.prev { margin-left: 552px; }
.page-box { width: 115px; height: 20px; margin-left: 10px; padding: 0 4px; border: 1px solid #999; background: #fff; display: flex; align-items: center; justify-content: space-between; color: #000; letter-spacing: .5px; }
.next { margin-left: 7px; }
.view-modes { margin-left: 214px; }
.percent { width: 56px; margin-left: 26px; letter-spacing: .6px; }

.taskbar { height: 40px; display: flex; background: linear-gradient(90deg, #dadae5, #dcdbe6 40%, #d6d9e2 60%, #dedce7); flex: none; font-family: "Open Sans", sans-serif; }
.start { width: 48px; padding: 12px 0 0 16px; }
.search { width: 344px; border: 1px solid #c6c6cb; border-bottom: 0; background: #fff; display: flex; align-items: center; gap: 10px; padding-left: 11px; font-size: 14px; color: #333; }
.task { width: 43px; height: 40px; padding-top: 8px; display: flex; justify-content: center; background: no-repeat center bottom / 34px 2px; }
.wide { width: 44px; }
.cortana { width: 48px; }
.viewer { width: 50px; }
.open { background-image: linear-gradient(#0078d7, #0078d7); }
.current { background-color: #eeeef4; background-size: 43px 2px; }
.photos { background-image: linear-gradient(90deg, #0078d7 76%, #66aee8 76%); }
.tray { margin-left: 22px; overflow: visible; }
.clock { width: 50px; margin-left: 14px; display: flex; flex-direction: column; align-items: center; font-size: 12px; line-height: 18px; padding-top: 2px; letter-spacing: -.3px; color: #111; }
.notice { margin-left: auto; margin-right: 10px; }
.show-desktop { width: 5px; border-left: 1px solid #aaa; }
.r-letter { font-family: "Liberation Serif", serif; }
```
FILE: figure.js
```js
const ns = 'http://www.w3.org/2000/svg';
const figure = document.getElementById('figure');

function add(tag, attrs, text) {
  const node = document.createElementNS(ns, tag);
  for (const key in attrs) node.setAttribute(key, attrs[key]);
  if (text) node.textContent = text;
  figure.appendChild(node);
}

function label(x, y, text, size, width, style) {
  const attrs = { x, y, 'font-size': size, class: 'calibri', style: style || 'font-weight:700' };
  if (width) attrs.textLength = width;
  add('text', attrs, text);
}

// A symbol with a superscript and a subscript stacked to its right.
function symbol(x, y, base, sup, sub, size, bold) {
  const small = size * 0.76;
  const step = size * 0.54;
  const weight = bold ? 700 : 400;
  add('text', { x, y, class: 'math', 'font-size': size, 'font-weight': weight, 'font-style': 'italic', fill: '#222' }, base);
  add('text', { x: x + step, y: y - size * 0.43, class: 'math', 'font-size': small, 'font-weight': weight, fill: '#222', textLength: small * 1.15 }, sup);
  add('text', { x: x + step, y: y + size * 0.28, class: 'math', 'font-size': small, 'font-weight': weight, 'font-style': sub.startsWith('(') ? 'normal' : 'italic', fill: '#222' }, sub);
}

function table(left, top, kind, source) {
  const gold = source === 1;
  const line = gold ? '#ffc933' : '#aaa';
  const xs = [0, 34.2, 74.2, 115.2, 126.7, 167.7, 179.2, 218.8];
  const ys = [0, 14.2, 33.7, 53.2, 68.2, 88.2];
  const fills = gold ? ['#fff', '#fff2cc', '#fff', '#fff2cc', '#fff'] : ['#efefef', '#dedede', '#efefef', '#dedede', '#efefef'];
  fills.forEach((fill, i) => add('rect', { x: left, y: top + ys[i], width: 218.8, height: ys[i + 1] - ys[i], fill }));
  xs.forEach(x => add('path', { d: `M${left + x} ${top}v88.2`, stroke: line }));
  ys.forEach(y => add('path', { d: `M${left} ${top + y}h218.8`, stroke: line, 'stroke-width': y === 14.2 ? 1.4 : 1 }));
  const centers = [54, 94, 147, 199];
  const names = kind === 'Cell' ? ['1', '2', 'j', 'C'] : ['1', '2', 'k', 'K'];
  centers.forEach((center, i) => {
    const w = kind === 'Cell' ? 17 : 28;
    label(left + center - w / 2, top + 9.8, kind, 7.5, w - 5);
    label(left + center + w / 2 - 4, top + 9.8, names[i], 7.5, 0, 'font-weight:700;font-style:italic');
  });
  label(left + 118, top + 9, '...', 7);
  label(left + 170, top + 9, '...', 7);
  const prefix = gold ? 'Gene' : 'ADT';
  const letters = ['1', '2', gold ? 'G' : 'D'];
  [24.2, 43.5, 78.2].forEach((y, i) => {
    const w = gold ? 22 : 18.5;
    label(left + 17 - w / 2, top + y, `${prefix} ${letters[i]}`, 7.3, w);
    centers.forEach((center, j) => {
      const sub = kind === 'Cell' ? letters[i] + names[j] : `${letters[i]}(${names[j]})`;
      symbol(left + center - (kind === 'Cell' ? 7 : 9), top + y + 3.8, kind === 'Cell' ? 'x' : 'α', `(${source})`, sub, 9);
    });
  });
  label(left + 15, top + 62, '...', 7);
  add('rect', { x: left + 126.7, y: top - 2, width: 41.2, height: 91.5, fill: 'none', stroke: '#34508d', 'stroke-width': 1.5, 'stroke-dasharray': '3.5 1.2' });
}

table(458.3, 317.2, 'Cell', 1);
table(696.2, 317.2, 'Cluster', 1);
table(458.3, 477, 'Cell', 2);
table(696.2, 477, 'Cluster', 2);

[606, 843.3].forEach(x => {
  add('path', { d: `M${x} 409v64`, stroke: '#416dbb', 'stroke-dasharray': '2 1' });
  add('path', { d: `M${x} 406.500l3 5h-6zM${x} 475.500l3-5h-6z`, fill: '#416dbb' });
});

[1, 2].forEach(source => {
  const sup = `(${source})`;
  const headY = source === 1 ? 307 : 581;
  symbol(602.5, headY, 'x', sup, 'j', 12.5, true);
  symbol(834.5, headY - (source === 1 ? 1 : 0), 'α', sup, '(k)', 12.5, true);
  const y = source === 1 ? 286.5 : 582;
  symbol(669, y, 'x', sup, 'j', 12, true);
  label(690, y, '~ Multinomial (', 11.3, 71, 'font-style:italic');
  symbol(761, y, 'p', sup, 'j', 12, true);
  label(781, y, ')', 11.3, 0, 'font-style:italic');
  symbol(669, y + 18, 'p', sup, 'j', 12, true);
  label(688.5, y + 18, '~ Dirichlet (', 11.3, 54, 'font-style:italic');
  symbol(743, y + 18, 'α', sup, '(k)', 12, true);
  label(761.5, y + 18, 'b', 11.3, 0, 'font-style:italic;fill:#f00');
  label(767, y + 20, 'j', 7.5, 0, 'font-style:italic;fill:#f00');
  label(771.5, y + 18, ')', 11.3, 0, 'font-style:italic');
});

document.querySelectorAll('text[textLength]').forEach(node => node.setAttribute('lengthAdjust', 'spacingAndGlyphs'));
```
